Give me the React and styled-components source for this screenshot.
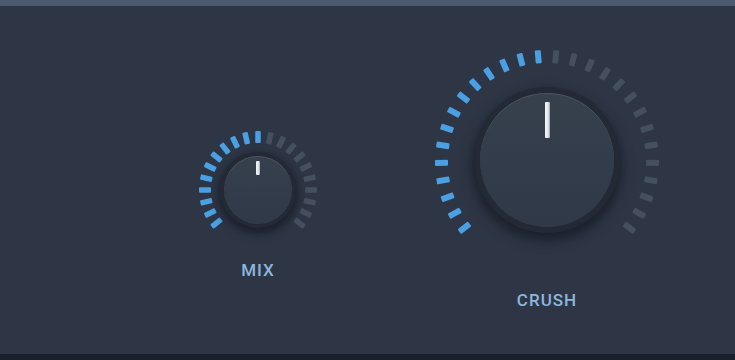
import React from 'react';
import styled, { createGlobalStyle } from 'styled-components';

const Global = createGlobalStyle`
  html, body { margin: 0; padding: 0; background: #1a2029; }
  body { font-family: Roboto, "Liberation Sans", sans-serif; }
  #root { width: 735px; height: 360px; }
`;

const Screen = styled.div`
  width: 735px;
  height: 360px;
  display: flex;
  flex-direction: column;
  background: #1a2029;
  overflow: hidden;
`;

const TopBar = styled.div`
  flex: none;
  height: 6px;
  background: #4c5a6e;
`;

const Panel = styled.div`
  flex: none;
  height: 348px;
  box-sizing: border-box;
  background: #2e3646;
  display: flex;
  align-items: flex-start;
  padding-left: 196px;
  gap: 112px;
`;

const Unit = styled.div`
  display: flex;
  flex-direction: column;
  align-items: center;
  margin-top: ${p => p.$top}px;
`;

const Dial = styled.div`
  display: grid;
  place-items: center;
  width: ${p => p.$size}px;
  height: ${p => p.$size}px;
  & > * { grid-area: 1 / 1; }
`;

const Ring = styled.svg`
  display: block;
  filter: blur(0.3px);
`;

const Face = styled.div`
  width: ${p => p.$d}px;
  height: ${p => p.$d}px;
  border-radius: 50%;
  box-sizing: border-box;
  display: flex;
  justify-content: center;
  align-items: flex-start;
  padding-top: ${p => p.$pad}px;
  background: linear-gradient(180deg, #37414e 0%, #333c4a 55%, #303947 100%);
  box-shadow:
    inset 0 1px 0 rgba(255, 255, 255, 0.1),
    0 0 0 ${p => p.$rim}px #232a35,
    0 ${p => p.$drop}px ${p => p.$drop * 2}px ${p => p.$rim + 2}px rgba(14, 18, 25, 0.6);
  transform: translateY(-${p => p.$lift}px);
`;

const Pointer = styled.div`
  width: ${p => p.$w}px;
  height: ${p => p.$h}px;
  border-radius: 1px;
  background: linear-gradient(90deg, #f3f5f6 0%, #e6e9ec 60%, #98a1ab 100%);
`;

const Label = styled.div`
  margin-top: ${p => p.$gap}px;
  font-family: Roboto, "Liberation Sans", sans-serif;
  font-weight: 500;
  font-size: 17px;
  line-height: 20px;
  letter-spacing: 1px;
  color: #8db6dd;
`;

const BottomStrip = styled.div`
  flex: 1;
  background: #1a2029;
`;

function Ticks({ size, count, rOuter, rInner, thick, value }) {
  const c = size / 2;
  const span = 257.14;
  const len = rOuter - rInner;
  const rMid = (rOuter + rInner) / 2;
  const items = [];
  for (let i = 0; i < count; i++) {
    const a = -span / 2 + (i * span) / (count - 1);
    const lit = i / (count - 1) <= value + 1e-6;
    items.push(
      <rect
        key={i}
        x={c - thick / 2}
        y={c - rMid - len / 2}
        width={thick}
        height={len}
        rx={1}
        fill={lit ? '#4aa0e2' : '#45505e'}
        transform={`rotate(${a} ${c} ${c})`}
      />
    );
  }
  return (
    <Ring width={size} height={size} viewBox={`0 0 ${size} ${size}`}>
      {items}
    </Ring>
  );
}

function Knob({ label, top, size, count, rOuter, rInner, thick, face, pad, pw, ph, rim, drop, lift, labelGap }) {
  return (
    <Unit $top={top}>
      <Dial $size={size}>
        <Ticks size={size} count={count} rOuter={rOuter} rInner={rInner} thick={thick} value={0.5} />
        <Face $d={face} $pad={pad} $rim={rim} $drop={drop} $lift={lift}>
          <Pointer $w={pw} $h={ph} />
        </Face>
      </Dial>
      <Label $gap={labelGap}>{label}</Label>
    </Unit>
  );
}

export default function App() {
  return (
    <Screen>
      <Global />
      <TopBar />
      <Panel>
        <Knob
          label="MIX"
          top={122}
          size={124}
          count={21}
          rOuter={59}
          rInner={47}
          thick={5.5}
          face={68}
          pad={5}
          pw={4}
          ph={14}
          rim={4}
          drop={4}
          lift={0}
          labelGap={8}
        />
        <Knob
          label="CRUSH"
          top={41}
          size={230}
          count={28}
          rOuter={112}
          rInner={99}
          thick={6}
          face={134}
          pad={9}
          pw={5}
          ph={36}
          rim={6}
          drop={6}
          lift={2}
          labelGap={13}
        />
      </Panel>
      <BottomStrip />
    </Screen>
  );
}
